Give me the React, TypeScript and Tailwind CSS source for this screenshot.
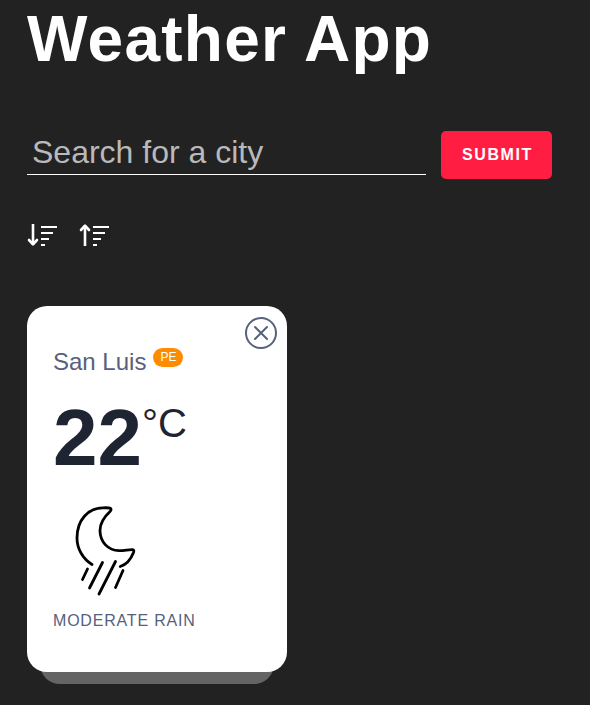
function SortIcon({ up = false }: { up?: boolean }) {
  return (
    <svg width="30" height="24" viewBox="0 0 30 24" fill="none" stroke="#fff" strokeWidth="2">
      <g transform={up ? "matrix(1 0 0 -1 0 24)" : undefined} strokeWidth="2.6">
        <path d="M6 1V22" />
        <path d="M2 17L6 21.300L10 17" strokeLinecap="round" strokeLinejoin="round" />
      </g>
      <path d="M14 4H30M14 10H26M14 16H22M14 22H18" />
    </svg>
  );
}

function MoonRain() {
  return (
    <svg width="80" height="110" viewBox="0 0 80 110" fill="none" stroke="#000" strokeWidth="2.8" strokeLinecap="round" strokeLinejoin="round">
      <path d="M27 69.500C18 64 12 54 12 43C12 25 23 13 38 12.800C41 12.700 44.500 12.800 45.500 13.300C46.500 14 46 15.500 45 16.500C38 23 34.800 29 35 36C35.300 47 43 55.500 54 55.700C59 55.800 64 54.400 67.500 54.600C69 54.700 69 55.800 68.500 57.500C66 64 61.500 69.500 55.300 71.500" />
      <path d="M22.500 74L17.500 84.500M37.500 67.500L24.500 93M50.500 66.500L34 99M58 75.500L50.500 92.500" />
    </svg>
  );
}

export default function App() {
  return (
    <main className="h-[705px] overflow-hidden bg-[#222] pl-[27px] font-['Liberation_Sans',Arial,sans-serif] text-white">
      <h1 className="h-[131px] whitespace-nowrap pt-[3px] text-[64px] leading-[73px] font-bold tracking-[1.28px]">Weather App</h1>
      <form className="flex h-12" onSubmit={(e) => e.preventDefault()}>
        <input
          className="h-[44px] w-[399px] border-b border-white bg-transparent pl-[5px] text-[32px] leading-[42px] outline-none placeholder:text-[#b9b9b9]"
          placeholder="Search for a city"
          aria-label="City"
        />
        <button className="ml-[15px] h-12 w-[111px] rounded-[5px] bg-[#ff1e42] pl-[2px] text-[16px] font-bold tracking-[1.6px]">SUBMIT</button>
      </form>
      <div className="mt-[44px] flex gap-[22px]">
        <SortIcon />
        <SortIcon up />
      </div>
      <article className="relative mt-[59px] h-[366px] w-[260px]">
        <div className="absolute right-[13px] -bottom-3 left-[13px] h-[50px] rounded-[20px] bg-[#646464]" />
        <div className="relative flex h-full flex-col rounded-[20px] bg-white pl-[26px]">
          <button className="absolute top-[11px] right-[10px]" aria-label="Remove">
            <svg width="32" height="32" viewBox="0 0 32 32" fill="none" stroke="#57617c" strokeWidth="2">
              <circle cx="16" cy="16" r="15" />
              <path d="M10 10L22 22M22 10L10 22" strokeLinecap="round" />
            </svg>
          </button>
          <h2 className="mt-[42px] flex h-[28px] text-[24px] leading-[28px] text-[#57617c]">
            San Luis
            <span className="ml-[7px] h-[19px] w-[30px] rounded-full bg-[#ff8c00] text-center text-[12px] leading-[18px] text-white">PE</span>
          </h2>
          <div className="mt-[16px] flex h-[92px] text-[#1e2432]">
            <span className="text-[80px] leading-[92px] font-bold">22</span>
            <span className="pt-[8px] text-[40px] leading-[46px]">°C</span>
          </div>
          <div className="mt-[11px] h-[117px] pl-[12px]">
            <MoonRain />
          </div>
          <p className="text-[16px] leading-[18px] tracking-[0.8px] text-[#57617c]">MODERATE RAIN</p>
        </div>
      </article>
    </main>
  );
}
